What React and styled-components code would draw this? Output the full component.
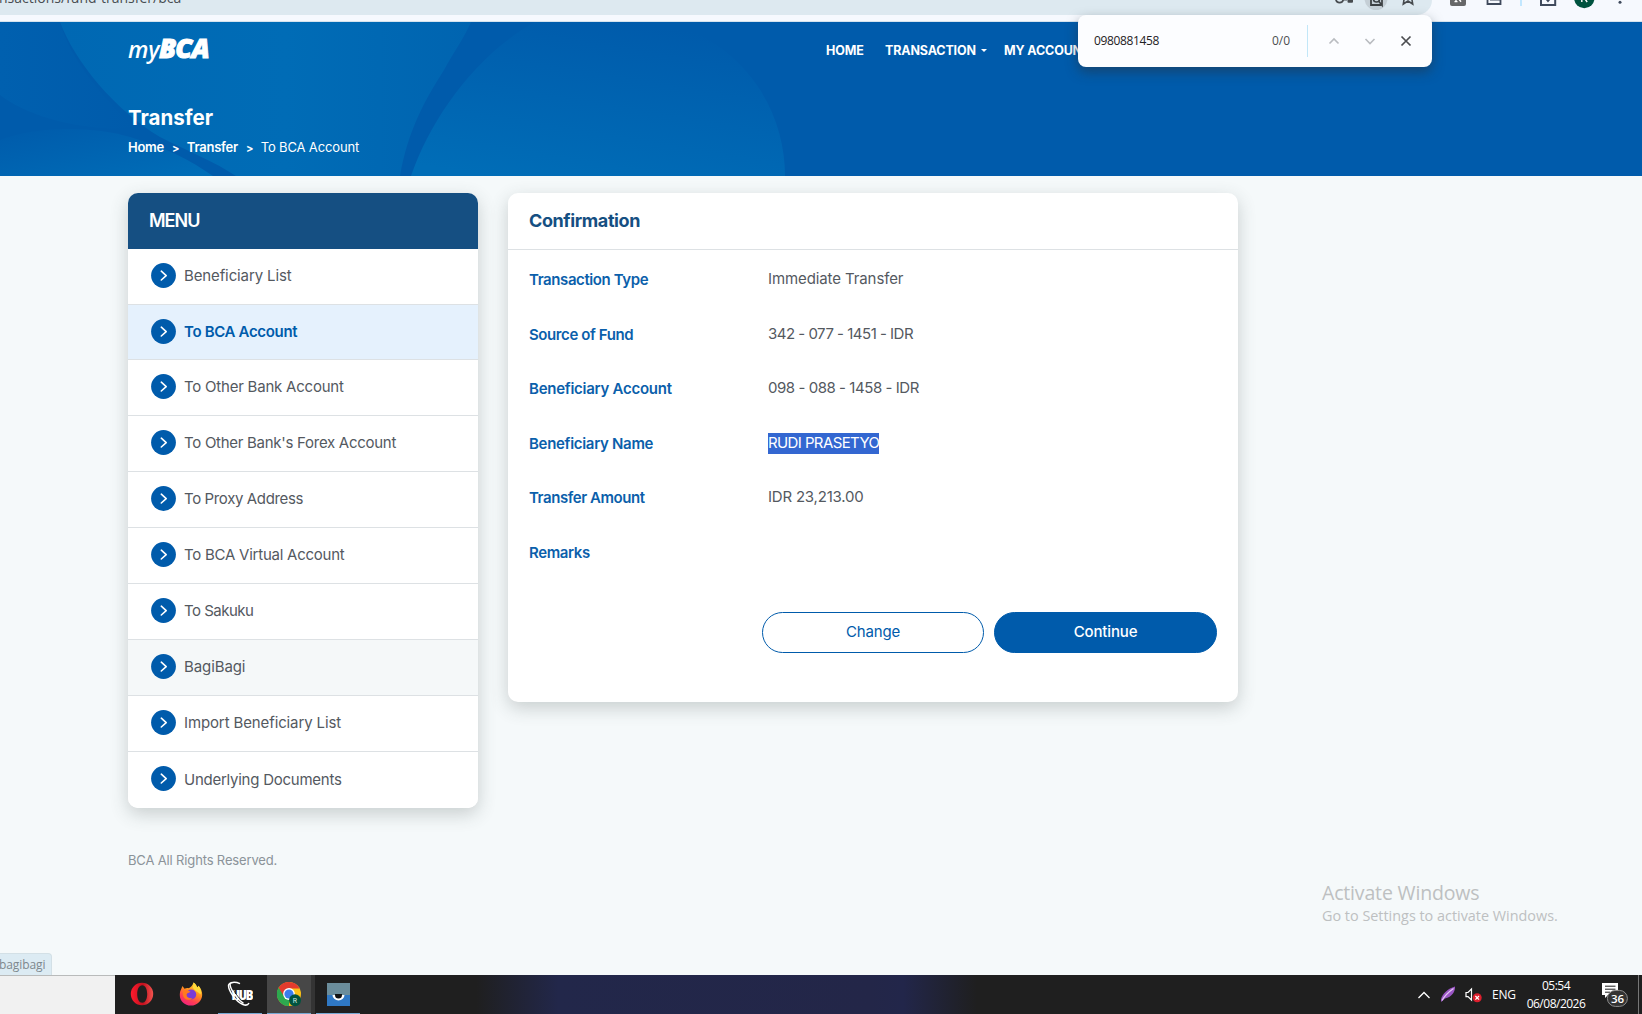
import React from "react";
import styled, { createGlobalStyle, css } from "styled-components";

const menuItems = [
  { label: "Beneficiary List", ls: -0.12 },
  { label: "To BCA Account", active: true, ls: -0.33 },
  { label: "To Other Bank Account", ls: -0.22 },
  { label: "To Other Bank's Forex Account", ls: -0.28 },
  { label: "To Proxy Address", ls: -0.37 },
  { label: "To BCA Virtual Account", ls: -0.24 },
  { label: "To Sakuku", ls: -0.5 },
  { label: "BagiBagi", hovered: true, ls: -0.1 },
  { label: "Import Beneficiary List", ls: -0.12 },
  { label: "Underlying Documents", ls: -0.25 },
];

const details = [
  { label: "Transaction Type", ls: -0.4, value: "Immediate Transfer", valueLs: -0.1 },
  { label: "Source of Fund", ls: -0.4, value: "342 - 077 - 1451 - IDR", valueLs: -0.5 },
  { label: "Beneficiary Account", ls: -0.26, value: "098 - 088 - 1458 - IDR", valueLs: -0.45 },
  { label: "Beneficiary Name", ls: -0.31, value: "RUDI PRASETYO", valueLs: -0.6, selected: true },
  { label: "Transfer Amount", ls: -0.44, value: "IDR 23,213.00", valueLs: -0.2 },
  { label: "Remarks", ls: -0.4, value: "" },
];

const ChevronCircle = () => (
  <svg width="25" height="25" viewBox="0 0 25 25">
    <circle cx="12.5" cy="12.5" r="12.4" fill="#005bab" />
    <path d="M10.3 8.2 L15.2 12.6 L10.3 17" fill="none" stroke="#fff" strokeWidth="1.6" strokeLinecap="round" strokeLinejoin="round" />
  </svg>
);

// Browser toolbar, only its lower edge is visible
const ToolbarIcons = () => (
  <svg width="312" height="21" viewBox="1330 0 312 21" fill="none">
    <path d="M1336 -0.5 a3.6 3.2 0 0 0 7.2 0 H1347" stroke="#474b4f" strokeWidth="1.8" />
    <rect x="1347.5" y="-3" width="5.5" height="5.8" rx="1" fill="#474b4f" />
    <circle cx="1376" cy="-1.5" r="11.5" fill="#c5cfd6" />
    <path d="M1371 -2 V5 H1381.5" stroke="#3c4043" strokeWidth="1.8" />
    <circle cx="1376.5" cy="-1" r="3" stroke="#3c4043" strokeWidth="1.6" />
    <path d="M1378.5 1 L1382 5.2 V-2" stroke="#3c4043" strokeWidth="1.7" />
    <path d="M1404.3 -2 L1403.3 4 L1408 1 L1412.7 4 L1411.7 -2" stroke="#474b4f" strokeWidth="1.6" />
    <rect x="1450" y="-10" width="16" height="16" rx="2" fill="#666768" />
    <path d="M1456 -3 V1.6 M1454.5 1.6 H1457.5 M1458.5 -1.5 L1461 1.7" stroke="#fff" strokeWidth="1.4" />
    <path d="M1487.5 -2 V4 H1500.5 V-2 M1490 -0.4 H1500" stroke="#3f4a5c" strokeWidth="1.8" />
    <path d="M1521 0 V6" stroke="#c2e7ff" strokeWidth="2" />
    <path d="M1541 0 V5 H1555.2 V0" stroke="#3f4a5c" strokeWidth="2" />
    <path d="M1545.5 -2 L1548 1 L1550.5 -2" stroke="#3f4a5c" strokeWidth="1.8" />
    <circle cx="1584.3" cy="-2" r="10.2" fill="#00533f" />
    <path d="M1581.8 -2 V2 M1585 -1 L1587.2 2" stroke="#fff" strokeWidth="1.4" />
    <circle cx="1620" cy="2.3" r="1.5" fill="#3f4a5c" />
  </svg>
);

const HeaderArt = () => (
  <svg width="1642" height="154" viewBox="0 22 1642 154">
    <defs>
      <linearGradient id="swoosh" x1="0" y1="0" x2="1" y2="0">
        <stop offset="0" stopColor="#0068b3" />
        <stop offset="0.55" stopColor="#006cb6" />
        <stop offset="1" stopColor="#0064b0" />
      </linearGradient>
      <linearGradient id="dome" x1="0.2" y1="1" x2="0.6" y2="0">
        <stop offset="0" stopColor="#006db7" />
        <stop offset="1" stopColor="#005bab" />
      </linearGradient>
      <linearGradient id="leftGlow" x1="0" y1="0" x2="1" y2="1">
        <stop offset="0" stopColor="#005bab" />
        <stop offset="1" stopColor="#006eb8" />
      </linearGradient>
      <linearGradient id="leftDim" x1="0" y1="0" x2="1" y2="0">
        <stop offset="0" stopColor="#0060af" />
        <stop offset="1" stopColor="#005bab" />
      </linearGradient>
    </defs>
    <path d="M0 22 H60 C70 60 105 100 135 128 C80 132 25 115 0 95 Z" fill="url(#leftDim)" />
    <path d="M60 22 C75 62 115 110 160 137 C190 152 215 162 236 176 H400 C408 130 425 100 444 70 C455 50 464 38 471 22 Z" fill="url(#swoosh)" />
    <path d="M0 140 C40 125 95 127 130 137 C165 147 190 160 213 176 H0 Z" fill="url(#leftGlow)" />
    <path d="M411 176 C430 120 475 55 535 22 H668 C745 45 785 110 785 176 Z" fill="url(#dome)" />
  </svg>
);

const OperaIcon = () => (
  <svg width="24" height="24" viewBox="0 0 24 24">
    <defs>
      <linearGradient id="opera" x1="0" y1="0" x2="1" y2="0">
        <stop offset="0" stopColor="#ff1b2d" />
        <stop offset="0.55" stopColor="#c3101e" />
        <stop offset="1" stopColor="#f2544f" />
      </linearGradient>
    </defs>
    <path fillRule="evenodd" fill="url(#opera)" d="M12 0.8 A11.2 11.2 0 1 0 12 23.2 A11.2 11.2 0 1 0 12 0.8 Z M12.2 3.2 C15.3 3.2 17.2 7 17.2 12 C17.2 17 15.3 20.8 12.2 20.8 C9.1 20.8 7.2 17 7.2 12 C7.2 7 9.1 3.2 12.2 3.2 Z" />
  </svg>
);

const FirefoxIcon = () => (
  <svg width="24" height="24" viewBox="0 0 24 24">
    <defs>
      <linearGradient id="fox" x1="0.8" y1="0" x2="0.3" y2="1">
        <stop offset="0" stopColor="#ffe03b" />
        <stop offset="0.45" stopColor="#ff8a1f" />
        <stop offset="0.75" stopColor="#ff3c53" />
        <stop offset="1" stopColor="#f0227f" />
      </linearGradient>
    </defs>
    <path d="M2.2 7 L3.5 4 L5.5 6.8 C7 6 8.5 6 9.8 6.2 C12 5 13.8 3 14.6 0.4 C17 2 17.4 4 18.4 5.4 L19.5 3.8 C21.8 6.5 23.4 9.5 23.2 13 C22.8 19 18 23.6 12 23.6 C5.5 23.6 0.8 19 0.8 13 C0.8 10.8 1.2 8.8 2.2 7 Z" fill="url(#fox)" />
    <circle cx="12.2" cy="12.5" r="5" fill="#7a3bd6" />
    <path d="M4 9 C7 7.6 9.5 8.4 11.5 9.8 C10 11 8 11 7.5 12.5 C7.4 15.8 11 17 13.5 16 C11 19.4 4.6 18 4 13 Z" fill="#ff7a1d" />
    <path d="M14.6 0.4 C17 2 17.4 4 18.4 5.4 L19.5 3.8 C21.8 6.5 22.6 9.5 21.6 12.5 C19 10 16.5 9.5 13.8 5.8 Z" fill="#ffd93a" />
  </svg>
);

const ChromeIcon = () => (
  <svg width="24" height="25" viewBox="0 0 24 25">
    <circle cx="12" cy="12" r="12" fill="#fbc116" />
    <path d="M12 12 L12 24 A12 12 0 0 1 1.6 6 Z" fill="#2da94f" />
    <path d="M1.6 6 L7.2 15 L12 6.5 H22.6 A12 12 0 0 0 1.6 6 Z" fill="#e33b2e" />
    <path d="M1.6 6 L7.2 15 L13 17.8 L10 23.8 A12 12 0 0 1 1.6 6 Z" fill="#2da94f" />
    <circle cx="12" cy="12" r="5.9" fill="#fff" />
    <circle cx="12" cy="12" r="4.6" fill="#3b7ded" />
    <circle cx="18" cy="18.3" r="6" fill="#00533f" />
    <text x="18" y="20.9" textAnchor="middle" fontFamily="Roboto, sans-serif" fontSize="7" fill="#d6ebe4">R</text>
  </svg>
);

const HubIcon = () => (
  <svg width="26" height="26" viewBox="0 0 26 26">
    <HubText x="4.5" y="18.5">HUB</HubText>
    <path d="M13 2.6 C8 0.5 2.5 1 1.6 4 C1 9 8 20 16 23.5 C19 24.7 21 24 22 22" fill="none" stroke="#fff" strokeWidth="1.5" />
    <path d="M5 3.5 C5.5 9 11 17 17 21.5" fill="none" stroke="#1f1f1f" strokeWidth="0.9" />
    <path d="M3 2.5 C3 8 9.5 18 16.5 22.3" fill="none" stroke="#fff" strokeWidth="1.4" />
  </svg>
);

const OwlIcon = () => (
  <svg width="23" height="23" viewBox="0 0 23 23">
    <rect width="23" height="12" fill="#6b8d9b" />
    <rect y="12" width="23" height="11" fill="#2f78c4" />
    <path d="M5.5 12 H17.5 A6 5.4 0 0 1 5.5 12 Z" fill="#fff" />
    <path d="M8 11 H15 V12 A3.5 3.5 0 0 1 8 12 Z" fill="#111" />
  </svg>
);

const FeatherIcon = () => (
  <svg width="16" height="17" viewBox="0 0 16 17">
    <path d="M15 0.5 C15.5 5 12 11 5 12.5 L1.2 16 L1 13.5 C2 8 8 2.5 15 0.5 Z" fill="#9a55c4" />
    <path d="M13.5 2.5 C10 5 5 9 2 14.5" stroke="#e5c8f5" strokeWidth="1.2" fill="none" />
  </svg>
);

const MutedIcon = () => (
  <svg width="18" height="16" viewBox="0 0 18 16">
    <path d="M1 5.5 H3 L6.5 2 V13 L3 9.6 H1 Z" fill="none" stroke="#fff" strokeWidth="1.2" />
    <circle cx="12.2" cy="10.8" r="4.5" fill="#dd1f2d" />
    <path d="M10.4 9 L14 12.6 M14 9 L10.4 12.6" stroke="#fff" strokeWidth="1.2" />
  </svg>
);

const NoticeIcon = () => (
  <svg width="28" height="26" viewBox="0 0 28 26">
    <path d="M1 1 H17 V13 H7 L4 16 V13 H1 Z" fill="#fff" />
    <path d="M4 4.2 H14.5 M4 7.2 H14.5 M4 10.2 H9" stroke="#1c1c1c" strokeWidth="1" />
    <rect x="6.4" y="8.4" width="20" height="16" rx="8" fill="#333" stroke="#8d8d8d" strokeWidth="1" />
    <text x="16.5" y="20.5" textAnchor="middle" fontFamily="Open Sans, sans-serif" fontWeight="600" fontSize="11.5" fill="#fff">36</text>
  </svg>
);

const App = () => (
  <Page>
    <GlobalStyle />
    <BrowserEdge>
      <Omnibox>
        <Address>nsactions/fund-transfer/bca</Address>
      </Omnibox>
      <IconStrip>
        <ToolbarIcons />
      </IconStrip>
    </BrowserEdge>

    <FindBar>
      <FindQuery>0980881458</FindQuery>
      <FindCount>0/0</FindCount>
      <FindDivider />
      <svg width="110" height="14" viewBox="0 0 110 14" fill="none">
        <path d="M13.5 9.5 L18 5 L22.5 9.5" stroke="#b9bcc0" strokeWidth="1.6" />
        <path d="M49.5 5 L54 9.5 L58.5 5" stroke="#b9bcc0" strokeWidth="1.6" />
        <path d="M85.5 2.5 L94.5 11.5 M94.5 2.5 L85.5 11.5" stroke="#4b4d50" strokeWidth="1.7" />
      </svg>
    </FindBar>

    <Header>
      <Art>
        <HeaderArt />
      </Art>
      <TopRow>
        <Logo>
          <span>my</span>
          <b>BCA</b>
        </Logo>
        <Nav>
          <NavLink $w={59}>HOME</NavLink>
          <NavLink $w={119}>
            TRANSACTION
            <Caret />
          </NavLink>
          <NavLink $w={120}>MY ACCOUNT</NavLink>
        </Nav>
      </TopRow>
      <Title>Transfer</Title>
      <Crumbs>
        <b>Home</b>
        <i>&gt;</i>
        <b>Transfer</b>
        <i>&gt;</i>
        <span>To BCA Account</span>
      </Crumbs>
    </Header>

    <Content>
      <Menu>
        <MenuHead>MENU</MenuHead>
        {menuItems.map((item) => (
          <MenuItem key={item.label} $active={item.active} $hovered={item.hovered} $ls={item.ls}>
            <ChevronCircle />
            <span>{item.label}</span>
          </MenuItem>
        ))}
      </Menu>
      <Card>
        <CardHead>Confirmation</CardHead>
        <Details>
          {details.map((row) => (
            <Row key={row.label}>
              <Label $ls={row.ls}>{row.label}</Label>
              <Value $ls={row.valueLs}>{row.selected ? <Selected>{row.value}</Selected> : row.value}</Value>
            </Row>
          ))}
        </Details>
        <Actions>
          <Button>Change</Button>
          <Button $primary>Continue</Button>
        </Actions>
      </Card>
    </Content>
    <Copyright>BCA All Rights Reserved.</Copyright>

    <Watermark>
      <h2>Activate Windows</h2>
      <p>Go to Settings to activate Windows.</p>
    </Watermark>
    <StatusBubble>bagibagi</StatusBubble>

    <Taskbar>
      <Blank />
      <Apps>
        <AppSlot>
          <OperaIcon />
        </AppSlot>
        <AppSlot>
          <FirefoxIcon />
        </AppSlot>
        <AppSlot $open>
          <HubIcon />
        </AppSlot>
        <AppSlot $open $focused>
          <ChromeIcon />
        </AppSlot>
        <AppSlot $open>
          <OwlIcon />
        </AppSlot>
      </Apps>
      <Tray>
        <svg width="14" height="10" viewBox="0 0 14 10">
          <path d="M1.5 8 L7 2.5 L12.5 8" fill="none" stroke="#fff" strokeWidth="1.3" />
        </svg>
        <FeatherIcon />
        <MutedIcon />
        <Lang>ENG</Lang>
        <Clock>
          <span>05:54</span>
          <span>06/08/2026</span>
        </Clock>
        <NoticeIcon />
      </Tray>
    </Taskbar>
  </Page>
);

export default App;

const GlobalStyle = createGlobalStyle`
  body {
    margin: 0;
    overflow: hidden;
  }

  * {
    box-sizing: border-box;
  }

  svg {
    display: block;
    flex: none;
  }
`;

const Page = styled.div`
  position: relative;
  display: flex;
  flex-direction: column;
  width: 1642px;
  height: 1014px;
  overflow: hidden;
  background: #f5f9fa;
  font-family: Inter, "Liberation Sans", sans-serif;
  white-space: nowrap;
`;

const BrowserEdge = styled.div`
  display: flex;
  flex: none;
  height: 22px;
  background: #f6f9fe;
  border-bottom: 1px solid #d5e3ee;
  overflow: hidden;
`;

const Omnibox = styled.div`
  display: flex;
  align-items: flex-start;
  width: 1432px;
  height: 15px;
  border-radius: 0 0 15px 0;
  background: #dde9f0;
  color: #484d51;
`;

const Address = styled.span`
  margin: -12px 0 0 -1px;
  font: 14px/20px "Open Sans", sans-serif;
`;

const IconStrip = styled.div`
  position: absolute;
  top: 0;
  left: 1330px;
`;

const FindBar = styled.div`
  position: absolute;
  z-index: 3;
  top: 15px;
  left: 1078px;
  display: flex;
  align-items: center;
  width: 354px;
  height: 52px;
  padding-left: 16px;
  border-radius: 8px;
  background: #fcfdff;
  box-shadow: 0 5px 12px rgba(40, 50, 60, 0.5);
  font: 12px/16px "Open Sans", sans-serif;
  color: #1f2123;
`;

const FindQuery = styled.div`
  width: 178px;
  letter-spacing: -0.35px;
`;

const FindCount = styled.div`
  width: 35px;
  color: #4b4d50;
`;

const FindDivider = styled.div`
  width: 1px;
  height: 32px;
  margin-right: 8px;
  background: #c2e7f8;
`;

const Header = styled.header`
  position: relative;
  flex: none;
  height: 154px;
  padding: 13px 128px 0;
  background: #005bab;
  color: #fff;
`;

const Art = styled.div`
  position: absolute;
  inset: 0;
`;

const TopRow = styled.div`
  position: relative;
  display: flex;
  height: 70px;
`;

const Logo = styled.div`
  display: flex;
  align-items: baseline;
  width: 698px;
  font-family: "Open Sans", sans-serif;
  font-style: italic;
  line-height: 26px;

  span {
    font-size: 23px;
    font-weight: 600;
    letter-spacing: -0.3px;
  }

  b {
    font-size: 27px;
    font-weight: 800;
    letter-spacing: -0.9px;
    -webkit-text-stroke: 1px #fff;
  }
`;

const Nav = styled.nav`
  display: flex;
  padding-top: 6px;
`;

const NavLink = styled.div`
  display: flex;
  align-items: center;
  width: ${({ $w }) => $w}px;
  height: 18px;
  font-size: 12.5px;
  font-weight: 700;
  letter-spacing: -0.15px;
`;

const Caret = styled.span`
  margin-left: 5px;
  border: 3px solid transparent;
  border-top-color: #fff;
  border-bottom: 0;
`;

const Title = styled.h1`
  position: relative;
  margin: 0;
  font-size: 20.5px;
  font-weight: 700;
  line-height: 26px;
`;

const Crumbs = styled.div`
  position: relative;
  display: flex;
  margin-top: 7px;
  font-size: 13px;
  line-height: 18px;
  letter-spacing: -0.15px;

  b {
    font-weight: 600;
    letter-spacing: -0.25px;
  }

  i {
    margin: 0 7.5px 0 8px;
    font-style: normal;
    font-weight: 700;
    font-size: 11px;
    line-height: 20px;
  }
`;

const Content = styled.main`
  display: flex;
  align-items: flex-start;
  gap: 30px;
  padding: 17px 0 0 128px;
`;

const panel = css`
  border-radius: 10px;
  background: #fff;
  box-shadow: 0 6px 18px rgba(60, 70, 70, 0.24);
  overflow: hidden;
`;

const Menu = styled.aside`
  ${panel}
  width: 350px;
`;

const MenuHead = styled.div`
  height: 56px;
  padding-left: 21px;
  background: #154f82;
  color: #fff;
  font-size: 18px;
  font-weight: 600;
  line-height: 56px;
  letter-spacing: -1px;
`;

const MenuItem = styled.div`
  display: flex;
  align-items: center;
  gap: 8px;
  height: ${({ $active }) => ($active ? 55 : 56)}px;
  padding: 0 0 2px 23px;
  border-bottom: 1px solid #dde1e4;
  background: ${({ $active, $hovered }) => ($active ? "#e5f1fd" : $hovered ? "#f5f8f9" : "#fff")};
  color: ${({ $active }) => ($active ? "#005bab" : "#54595f")};
  font-size: 15px;
  font-weight: ${({ $active }) => ($active ? 600 : 380)};
  letter-spacing: ${({ $ls }) => $ls}px;

  &:last-child {
    border-bottom-color: transparent;
  }

  &:last-child span {
    padding-top: 2px;
  }
`;

const Card = styled.section`
  ${panel}
  width: 730px;
  height: 509px;
`;

const CardHead = styled.div`
  height: 57px;
  padding-left: 21px;
  border-bottom: 1px solid #dde1e4;
  color: #154f82;
  font-size: 18px;
  font-weight: 700;
  line-height: 56px;
  letter-spacing: -0.4px;
`;

const Details = styled.div`
  display: grid;
  grid-auto-rows: 54.5px;
  padding: 17px 21px 0;
`;

const Row = styled.div`
  display: grid;
  grid-template-columns: 239px 1fr;
  font-size: 15px;
  line-height: 24px;
`;

const Label = styled.div`
  padding-top: 1px;
  color: #0b5fab;
  font-weight: 600;
  letter-spacing: ${({ $ls }) => $ls}px;
`;

const Value = styled.div`
  color: #54595f;
  font-weight: 380;
  letter-spacing: ${({ $ls }) => $ls || 0}px;
`;

const Selected = styled.span`
  display: inline-block;
  height: 21px;
  margin-top: 1px;
  line-height: 19px;
  background: #3367d1;
  color: #fff;
`;

const Actions = styled.div`
  display: grid;
  grid-template-columns: 222px 223px;
  justify-content: end;
  gap: 10px;
  padding: 18px 21px 0;
`;

const Button = styled.button`
  height: 41px;
  padding: 0 0 2px;
  border: 1px solid #005bab;
  border-radius: 21px;
  background: ${({ $primary }) => ($primary ? "#005bab" : "#fff")};
  color: ${({ $primary }) => ($primary ? "#fff" : "#005bab")};
  font-family: inherit;
  font-size: 15px;
  font-weight: ${({ $primary }) => ($primary ? 500 : 400)};
  letter-spacing: -0.15px;
`;

const Copyright = styled.footer`
  padding: 43px 0 0 128px;
  color: #8b9399;
  font-size: 13px;
  line-height: 18px;
  letter-spacing: -0.15px;
`;

const Watermark = styled.div`
  position: absolute;
  top: 880px;
  left: 1322px;
  color: #bdc0c1;
  font-family: "Open Sans", sans-serif;

  h2 {
    margin: 0;
    font-size: 19.5px;
    font-weight: 400;
    line-height: 26px;
    letter-spacing: -0.17px;
  }

  p {
    margin: 0;
    font-size: 14.4px;
    line-height: 20px;
  }
`;

const StatusBubble = styled.div`
  position: absolute;
  top: 953px;
  left: 0;
  width: 52px;
  height: 22px;
  border: solid #d3e0e6;
  border-width: 1px 1px 0 0;
  border-radius: 0 4px 0 0;
  background: #dcebf3;
  color: #7e888d;
  font: 12px/22px "Open Sans", sans-serif;
  text-indent: -1px;
  letter-spacing: -0.1px;
`;

const Taskbar = styled.div`
  display: flex;
  height: 39px;
  margin-top: auto;
  background: linear-gradient(90deg, #1f1f1f 29%, #22274a 34%, #232648 53%, #22264a 55%, #1f1f1f 59.5%);
  color: #fff;
`;

const Blank = styled.div`
  width: 115px;
  border-top: 1px solid #b9bbbb;
  background: #f1f1f1;
`;

const Apps = styled.div`
  display: flex;
  gap: 5px;
  padding-left: 5px;
`;

const AppSlot = styled.div`
  display: grid;
  place-items: center;
  width: 44px;
  height: 39px;
  border-bottom: 1px solid ${({ $open }) => ($open ? "#76a9d4" : "transparent")};
  background: ${({ $focused }) => ($focused ? "#474747" : "transparent")};
  box-shadow: ${({ $focused }) => ($focused ? "4px 0 0 #343434" : "none")};
`;

const HubText = styled.text`
  fill: #fff;
  font: 800 14px "Open Sans", sans-serif;
  font-stretch: 75%;
  letter-spacing: -1.2px;
`;

const Tray = styled.div`
  display: flex;
  align-items: center;
  gap: 9px;
  margin-left: auto;
  margin-right: 3px;
  padding-right: 9px;
  border-right: 1px solid #777;
  font: 12px/18px "Open Sans", sans-serif;
`;

const Lang = styled.div`
  width: 25px;
  letter-spacing: -0.2px;
`;

const Clock = styled.div`
  display: flex;
  flex-direction: column;
  align-items: center;
  width: 60px;
  margin-right: 6px;
  letter-spacing: -0.5px;
`;
